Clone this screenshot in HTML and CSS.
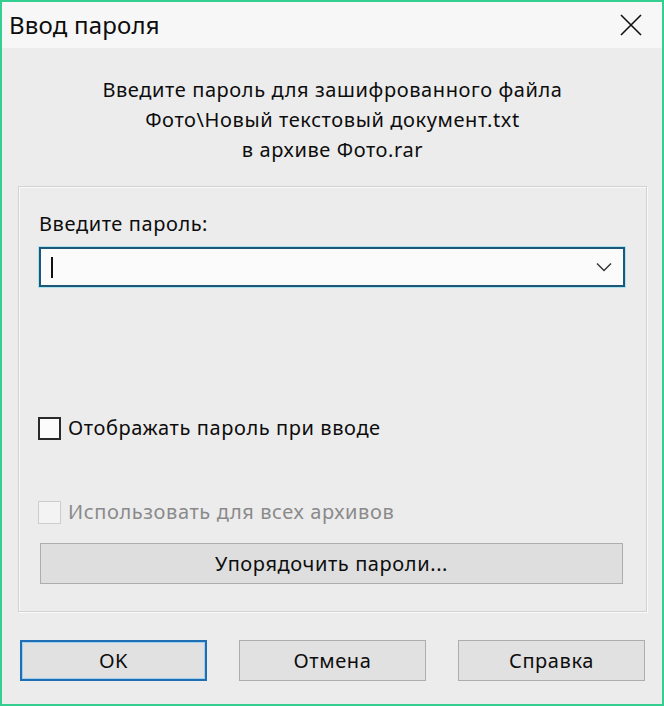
FILE: index.html
```html
<!DOCTYPE html>
<html lang="ru">
<head>
    <meta charset="UTF-8">
    <title>Ввод пароля</title>
    <link rel="stylesheet" href="styles.css">
</head>
<body>
    <div class="window">
        <div class="titlebar">
            <span class="title">Ввод пароля</span>
            <svg class="close" width="22" height="22" viewBox="0 0 22 22">
                <path d="M1 1L21 21M21 1L1 21" stroke="#111" stroke-width="1.6" fill="none"/>
            </svg>
        </div>
        <div class="content">
            <div class="message">
                <div>Введите пароль для зашифрованного файла</div>
                <div>Фото\Новый текстовый документ.txt</div>
                <div>в архиве Фото.rar</div>
            </div>
            <div class="group">
                <div class="label">Введите пароль:</div>
                <div class="combo">
                    <span class="caret"></span>
                    <svg class="chevron" width="16" height="10" viewBox="0 0 16 10">
                        <path d="M1 1.5L8 8.5L15 1.5" stroke="#333" stroke-width="1.4" fill="none"/>
                    </svg>
                </div>
                <label class="check first">
                    <span class="box"></span>
                    <span>Отображать пароль при вводе</span>
                </label>
                <label class="check disabled">
                    <span class="box"></span>
                    <span>Использовать для всех архивов</span>
                </label>
                <div class="btn wide">Упорядочить пароли...</div>
            </div>
            <div class="buttons">
                <div class="btn default">OK</div>
                <div class="btn">Отмена</div>
                <div class="btn">Справка</div>
            </div>
        </div>
    </div>
</body>
</html>
```

FILE: styles.css
```css
*{
    margin: 0;
    padding: 0;
    box-sizing: border-box;
}
body{
    background-color: #ececec;
    font-family: "Noto Sans", "Open Sans", sans-serif;
    color: #0d0d0d;
}
.window{
    width: 664px;
    height: 706px;
    border: 2px solid #34cf90;
    display: flex;
    flex-direction: column;
    background-color: #ececec;
}
.titlebar{
    height: 46px;
    background-color: #f7f7f7;
    display: flex;
    align-items: center;
    justify-content: space-between;
    padding: 0 20px 0 7px;
}
.title{
    font-size: 24px;
    letter-spacing: 0.2px;
    margin-top: -2px;
}
.close{
    margin-top: -1px;
}
.content{
    flex: 1;
    display: flex;
    flex-direction: column;
    padding: 27px 15px 0 16px;
    font-size: 20px;
    letter-spacing: 0.6px;
}
.message{
    text-align: center;
    line-height: 30px;
}
.group{
    margin-top: 21px;
    height: 426px;
    border: 1px solid #d2d2d2;
    box-shadow: inset 1px 1px 0 #fafafa, 1px 1px 0 #fafafa;
    padding: 25px 21px 0 20px;
    display: flex;
    flex-direction: column;
}
.label{
    line-height: 24px;
}
.combo{
    margin-top: 11px;
    height: 40px;
    background-color: #fbfbfb;
    border: 2px solid #1d5878;
    box-shadow: 0 0 0 1px #a9e3ef;
    display: flex;
    align-items: center;
    justify-content: space-between;
    padding: 0 11px 0 10px;
}
.caret{
    width: 2px;
    height: 21px;
    background-color: #111;
}
.check{
    display: flex;
    align-items: center;
    gap: 7px;
    line-height: 24px;
    margin-left: -1px;
}
.check.first{
    margin-top: 129px;
}
.check.disabled{
    margin-top: 60px;
    color: #8a8a8a;
}
.box{
    width: 23px;
    height: 23px;
    border: 2px solid #2a2a2a;
    background-color: #fcfcfc;
}
.disabled .box{
    border: 1px solid #cdcdcd;
    background-color: #f3f3f3;
}
.btn{
    height: 41px;
    background-color: #e1e1e1;
    border: 1px solid #adadad;
    display: flex;
    align-items: center;
    justify-content: center;
}
.btn.wide{
    margin: 19px 2px 0 1px;
    background-color: #dedede;
}
.buttons{
    margin-top: 28px;
    display: flex;
    gap: 32px;
    padding: 0 2px 0 2px;
}
.buttons .btn{
    width: 187px;
}
.btn.default{
    border: 2px solid #1f6db3;
    box-shadow: inset 0 0 0 1px #9fd0f0;
}
```
